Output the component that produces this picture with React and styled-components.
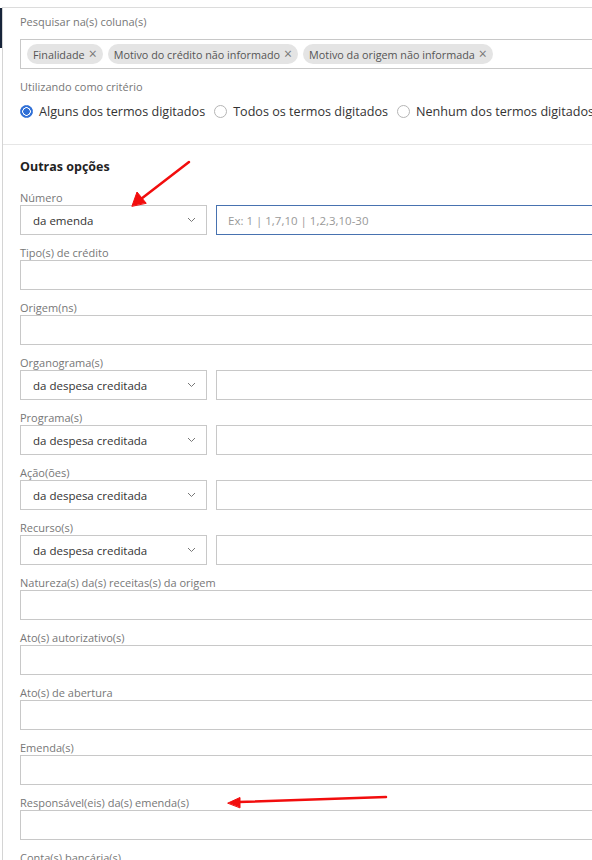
import React from "react"
import styled, { createGlobalStyle } from "styled-components"

const GlobalStyles = createGlobalStyle`
  html, body {
    margin: 0;
    padding: 0;
    background: #fff;
    overflow: hidden;
  }
  body {
    font-family: "Open Sans", "Noto Sans", sans-serif;
    color: #333;
  }
`

const Page = styled.div`
  position: relative;
  width: 660px;
  padding-top: 7px;
  display: flex;
`

const Rail = styled.div`
  width: 2px;
  flex: none;

  .active {
    height: 40px;
    margin-top: 1px;
    background-color: #17243a;
  }
`

const Panel = styled.div`
  flex: 1;
  border-top: 1px solid #dcdcdc;
  border-left: 1px solid #d4d4d4;
  min-height: 900px;
`

const Section = styled.div`
  padding: ${(p) => p.$pad || "6px 0 0 17px"};
  border-bottom: ${(p) => (p.$divider ? "1px solid #e6e6e6" : "none")};
`

const Label = styled.div`
  font-size: 11px;
  line-height: 15px;
  color: #777;
  margin-top: ${(p) => p.$top ?? 10}px;
  white-space: nowrap;
`

const Title = styled.div`
  font-size: 12.5px;
  line-height: 18px;
  font-weight: 700;
  color: #222;
`

const TagBox = styled.div`
  margin-top: 10px;
  height: 30px;
  box-sizing: border-box;
  border: 1px solid #c8c8c8;
  border-right: none;
  display: flex;
  align-items: center;
  gap: 5px;
  padding-left: 6px;
`

const Tag = styled.span`
  display: inline-flex;
  align-items: center;
  gap: 4px;
  height: 20px;
  padding: 0 6px;
  border-radius: 10px;
  background-color: #e4e4e4;
  font-size: 10.8px;
  color: #555;
  white-space: nowrap;

  .x {
    font-size: 14px;
    color: #777;
    line-height: 1;
  }
`

const RadioRow = styled.div`
  margin-top: 7px;
  display: flex;
  align-items: center;
  height: 20px;
  white-space: nowrap;
`

const RadioOption = styled.label`
  display: inline-flex;
  align-items: center;
  gap: 6px;
  margin-right: 9px;
  font-size: 12.6px;
  color: #333;
`

const RadioDot = styled.span`
  width: 13px;
  height: 13px;
  box-sizing: border-box;
  border-radius: 50%;
  border: 1px solid ${(p) => (p.$checked ? "#2f6fd6" : "#b5b5b5")};
  background: ${(p) =>
    p.$checked
      ? "radial-gradient(circle, #2f6fd6 0 3px, #fff 3.5px 4px, #2f6fd6 4.5px)"
      : "#fff"};
`

const Row = styled.div`
  display: flex;
  gap: 9px;
`

const Select = styled.div`
  width: 187px;
  height: 30px;
  flex: none;
  box-sizing: border-box;
  border: 1px solid #c8c8c8;
  display: flex;
  align-items: center;
  justify-content: space-between;
  padding: 0 10px 0 12px;
  font-size: 11.5px;
  color: #333;

  svg {
    width: 9px;
    height: 6px;
  }
`

const Input = styled.div`
  flex: 1;
  height: 30px;
  box-sizing: border-box;
  border: 1px solid ${(p) => (p.$focus ? "#4772b0" : "#c8c8c8")};
  border-right: none;
  display: flex;
  align-items: center;
  padding-left: 11px;
  font-size: 11.5px;
  color: #999;
`

const Overlay = styled.svg`
  position: absolute;
  left: 0;
  top: 0;
  pointer-events: none;
`

const Chevron = () => (
  <svg viewBox="0 0 9 6">
    <path d="M1 1l3.5 3.5L8 1" fill="none" stroke="#777" strokeWidth="1" />
  </svg>
)

const Field = ({ label, select, placeholder, focus }) => (
  <>
    <Label>{label}</Label>
    <Row>
      {select && (
        <Select>
          {select}
          <Chevron />
        </Select>
      )}
      <Input $focus={focus}>{placeholder}</Input>
    </Row>
  </>
)

const fields = [
  { label: "Tipo(s) de crédito" },
  { label: "Origem(ns)" },
  { label: "Organograma(s)", select: "da despesa creditada" },
  { label: "Programa(s)", select: "da despesa creditada" },
  { label: "Ação(ões)", select: "da despesa creditada" },
  { label: "Recurso(s)", select: "da despesa creditada" },
  { label: "Natureza(s) da(s) receitas(s) da origem" },
  { label: "Ato(s) autorizativo(s)" },
  { label: "Ato(s) de abertura" },
  { label: "Emenda(s)" },
  { label: "Responsável(eis) da(s) emenda(s)" },
  { label: "Conta(s) bancária(s)" },
]

const App = () => {
  return (
    <>
      <GlobalStyles />
      <Page>
        <Rail>
          <div className="active" />
        </Rail>
        <Panel>
          <Section $divider $pad="6px 0 23px 17px">
            <Label $top={0}>Pesquisar na(s) coluna(s)</Label>
            <TagBox>
              <Tag>
                Finalidade <span className="x">×</span>
              </Tag>
              <Tag>
                Motivo do crédito não informado <span className="x">×</span>
              </Tag>
              <Tag>
                Motivo da origem não informada <span className="x">×</span>
              </Tag>
            </TagBox>
            <Label $top={10}>Utilizando como critério</Label>
            <RadioRow>
              <RadioOption>
                <RadioDot $checked />
                Alguns dos termos digitados
              </RadioOption>
              <RadioOption>
                <RadioDot />
                Todos os termos digitados
              </RadioOption>
              <RadioOption>
                <RadioDot />
                Nenhum dos termos digitados
              </RadioOption>
            </RadioRow>
          </Section>
          <Section $pad="13px 0 0 17px">
            <Title>Outras opções</Title>
            <Label $top={14}>Número</Label>
            <Row>
              <Select>
                da emenda
                <Chevron />
              </Select>
              <Input $focus>Ex: 1 | 1,7,10 | 1,2,3,10-30</Input>
            </Row>
            {fields.map((f) => (
              <Field key={f.label} {...f} />
            ))}
          </Section>
        </Panel>
        <Overlay width="592" height="860">
          <g stroke="#f20d0d" fill="#f20d0d" strokeWidth="2.5" strokeLinecap="round">
            <line x1="189" y1="162" x2="141" y2="199" />
            <polygon points="132,206 137,192 146,203" strokeWidth="1" />
            <line x1="386" y1="797" x2="238" y2="802" />
            <polygon points="228,803 240,797.5 240,807.5" strokeWidth="1" />
          </g>
        </Overlay>
      </Page>
    </>
  )
}

export default App
